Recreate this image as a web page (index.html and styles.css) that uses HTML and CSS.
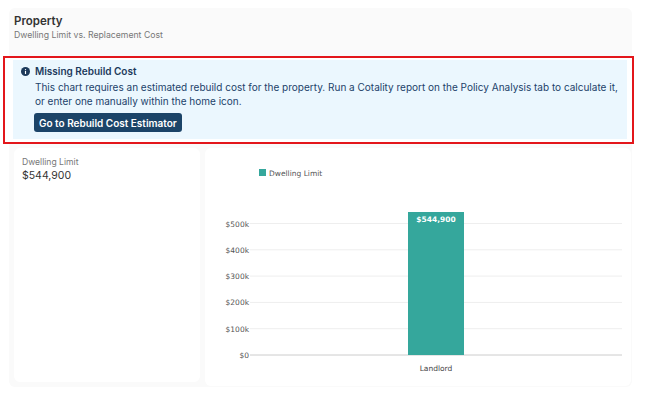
FILE: index.html
```html
<!DOCTYPE html>
<html>
<head>
<meta charset="utf-8">
<link rel="stylesheet" href="styles.css">
</head>
<body>
<div class="panel">
  <div class="head">
    <div class="title">Property</div>
    <div class="subtitle">Dwelling Limit vs. Replacement Cost</div>
  </div>
  <div class="frame">
    <div class="alert">
      <div class="alert-title">
        <svg class="info" viewBox="0 0 16 16" width="9" height="9"><circle cx="8" cy="8" r="8" fill="#1d3a5a"/><rect x="7" y="7" width="2" height="5.5" fill="#fff"/><circle cx="8" cy="4.6" r="1.2" fill="#fff"/></svg>
        <span>Missing Rebuild Cost</span>
      </div>
      <p class="alert-text">This chart requires an estimated rebuild cost for the property. Run a Cotality report on the Policy Analysis tab to calculate it, or enter one manually within the home icon.</p>
      <button class="btn">Go to Rebuild Cost Estimator</button>
    </div>
  </div>
  <div class="cards">
    <div class="card card-left">
      <div class="stat-label">Dwelling Limit</div>
      <div class="stat-value">$544,900</div>
    </div>
    <div class="card card-right">
      <svg class="chart" width="426" height="238" viewBox="0 0 426 238">
        <rect x="54" y="21" width="7" height="7" fill="#35a79c"/>
        <text x="64" y="28" class="legend">Dwelling Limit</text>
        <g class="grid">
          <line x1="45" y1="75.5" x2="417" y2="75.5"/>
          <line x1="45" y1="101.8" x2="417" y2="101.8"/>
          <line x1="45" y1="128.1" x2="417" y2="128.1"/>
          <line x1="45" y1="154.4" x2="417" y2="154.4"/>
          <line x1="45" y1="180.7" x2="417" y2="180.7"/>
        </g>
        <line x1="45" y1="207" x2="417" y2="207" class="zero"/>
        <g class="ylab">
          <text x="44" y="78.5">$500k</text>
          <text x="44" y="104.8">$400k</text>
          <text x="44" y="131.1">$300k</text>
          <text x="44" y="157.4">$200k</text>
          <text x="44" y="183.7">$100k</text>
          <text x="44" y="210">$0</text>
        </g>
        <rect x="203" y="64" width="56" height="143" fill="#35a79c"/>
        <text x="231" y="74" class="barlab">$544,900</text>
        <text x="231" y="223" class="xlab">Landlord</text>
      </svg>
    </div>
  </div>
</div>
</body>
</html>
```
FILE: styles.css
```css
* { box-sizing: border-box; }
body {
  margin: 0;
  background: #fff;
  font-family: Inter, "Noto Sans", sans-serif;
}
.panel {
  margin: 8px 0 0 9px;
  width: 623px;
  height: 379px;
  background: #fafafa;
  border-radius: 6px;
  padding: 6px 0 0 5px;
}
.head { height: 42px; }
.title {
  font-size: 11.5px;
  font-weight: 600;
  color: #333;
  line-height: 15px;
}
.subtitle {
  font-size: 8.7px;
  color: #777;
  line-height: 13px;
}
.frame {
  margin-left: -11px;
  width: 631px;
  height: 88px;
  border: 2px solid #e3161b;
  background: #fff;
  padding: 2px 5px 3px 8px;
}
.alert {
  background: #ebf7fe;
  height: 100%;
  padding: 4px 8px 0 8px;
  color: #1c3a5c;
}
.alert-title {
  display: flex;
  align-items: center;
  gap: 5px;
  font-size: 10px;
  font-weight: 600;
  line-height: 14px;
}
.info { display: block; }
.alert-text {
  margin: 2px 0 0 14px;
  font-size: 10px;
  line-height: 14px;
  color: #22426a;
}
.btn {
  display: block;
  margin: 5px 0 0 13px;
  height: 19px;
  padding: 0 5px;
  background: #1b4468;
  color: #fff;
  border: none;
  border-radius: 3px;
  font-family: Inter, "Noto Sans", sans-serif;
  font-size: 10px;
  font-weight: 600;
}
.cards {
  display: grid;
  grid-template-columns: 186px 426px;
  gap: 5px;
  align-items: start;
  margin-top: 4px;
}
.card {
  background: #fff;
  border-radius: 6px;
}
.card-left {
  height: 234px;
  padding: 9px 8px;
}
.card-right { height: 238px; }
.stat-label {
  font-size: 8.6px;
  color: #777;
  line-height: 11px;
}
.stat-value {
  font-size: 10.5px;
  color: #333;
  line-height: 16px;
}
.chart { display: block; font-family: "DejaVu Sans", Verdana, sans-serif; }
.legend { font-size: 7.5px; fill: #555; }
.grid line { stroke: #eee; stroke-width: 1; }
.zero { stroke: #ccc; stroke-width: 1; }
.ylab text { font-size: 7.5px; fill: #555; text-anchor: end; }
.barlab { font-size: 7.5px; font-weight: bold; fill: #fff; text-anchor: middle; }
.xlab { font-size: 7.5px; fill: #444; text-anchor: middle; }
```
